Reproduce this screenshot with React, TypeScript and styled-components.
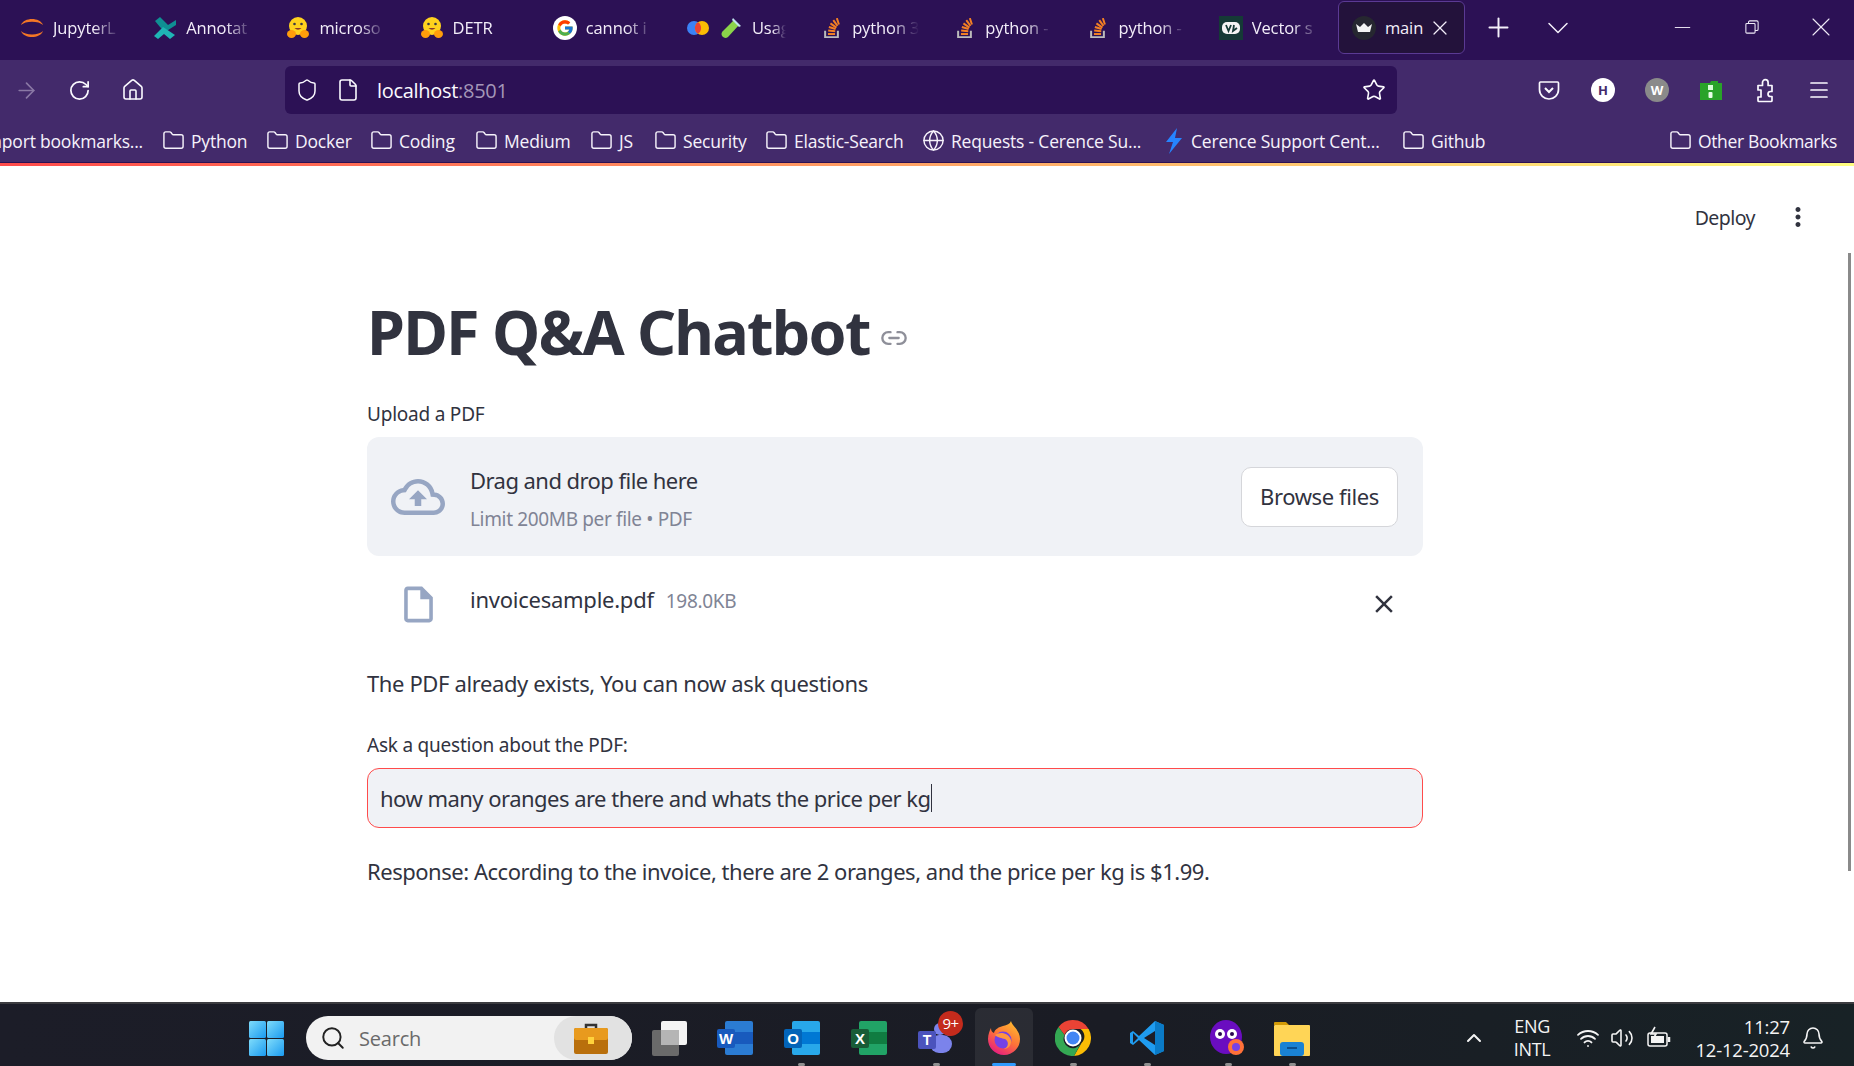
import React from 'react';
import styled, { createGlobalStyle } from 'styled-components';
import { ArrowRight, RotateCw, Home, Shield, File, Star, Menu, Link2, Plus, ChevronDown, Minus, X, Search, ChevronUp, Wifi, Volume2, Bell, Folder, Globe } from 'lucide-react';
import { MdOutlineCloudUpload, MdOutlineInsertDriveFile, MdClose, MdMoreVert } from 'react-icons/md';
import { FcGoogle } from 'react-icons/fc';

const GlobalStyle = createGlobalStyle`
  html, body { margin: 0; padding: 0; height: 100%; overflow: hidden; background: #fff; }
  body { font-family: "Noto Sans", "Open Sans", sans-serif; }
  * { box-sizing: border-box; }
`;

const UI_FONT = `"Open Sans", "Noto Sans", sans-serif`;
const APP_FONT = `"Noto Sans", "Open Sans", sans-serif`;

const Shell = styled.div`
  display: flex;
  flex-direction: column;
  height: 100vh;
  width: 100%;
  overflow: hidden;
`;

const TabStrip = styled.div`
  height: 60px;
  flex: none;
  background: #2c1155;
  display: flex;
  align-items: flex-start;
  padding: 1px 0 0 6px;
  gap: 6.2px;
  overflow: hidden;
  font-family: ${UI_FONT};
`;

const Tab = styled.div<{ $active?: boolean }>`
  width: 127px;
  height: 53px;
  flex: none;
  display: flex;
  align-items: center;
  gap: 9px;
  padding: 0 12px 0 13px;
  border-radius: 6px;
  color: #f3eef9;
  font-size: 16.5px;
  letter-spacing: -0.1px;
  background: ${(p) => (p.$active ? '#23123b' : 'transparent')};
  border: 1px solid ${(p) => (p.$active ? '#5b3a94' : 'transparent')};
`;

const TabLabel = styled.span<{ $fade?: boolean }>`
  flex: 1;
  min-width: 0;
  white-space: nowrap;
  ${(p) => p.$fade && `-webkit-mask-image: linear-gradient(to right, #000 60%, transparent 100%); mask-image: linear-gradient(to right, #000 60%, transparent 100%);`}
`;

const TabIconBox = styled.span`
  width: 24px;
  height: 24px;
  flex: none;
  display: flex;
  align-items: center;
  justify-content: center;
`;

const StripButton = styled.div`
  width: 54px;
  height: 53px;
  flex: none;
  display: flex;
  align-items: center;
  justify-content: center;
  color: #f4f0fa;
`;

const WindowControls = styled.div`
  margin-left: auto;
  margin-right: -1px;
  display: flex;
  height: 52px;
`;

const WindowButton = styled.div`
  width: 69px;
  display: flex;
  align-items: center;
  justify-content: center;
  color: #f0ebf7;
`;

const NavBar = styled.div`
  height: 60px;
  flex: none;
  background: #432a6b;
  display: flex;
  align-items: center;
`;

const NavButton = styled.div<{ $dim?: boolean }>`
  width: 53px;
  flex: none;
  display: flex;
  align-items: center;
  justify-content: center;
  color: ${(p) => (p.$dim ? '#8a78a5' : '#fbfaff')};
`;

const UrlBar = styled.div`
  width: 1112px;
  height: 48px;
  flex: none;
  margin: 0 125px 0 126px;
  background: #2c1155;
  border-radius: 6px;
  display: flex;
  align-items: center;
  padding: 0 11px 0 10px;
  color: #fbfaff;
`;

const UrlIcon = styled.span`
  display: flex;
  margin-right: 17px;
`;

const UrlText = styled.div`
  flex: 1;
  font-family: ${UI_FONT};
  font-size: 20px;
  letter-spacing: -0.3px;
  line-height: 26px;
  padding-top: 1px;
  color: #fbfaff;
`;

const UrlPort = styled.span`
  color: #a497b8;
`;

const ExtSlot = styled.div`
  width: 54px;
  flex: none;
  display: flex;
  justify-content: center;
  align-items: center;
  color: #fbfaff;
`;

const ProfileDot = styled.span<{ $grey?: boolean }>`
  width: 24px;
  height: 24px;
  border-radius: 50%;
  display: flex;
  align-items: center;
  justify-content: center;
  font: 700 13px ${UI_FONT};
  background: ${(p) => (p.$grey ? '#8a8a8a' : '#fff')};
  color: ${(p) => (p.$grey ? '#fff' : '#432a6b')};
`;

const BookmarksBar = styled.div`
  height: 43px;
  flex: none;
  background: #432a6b;
  border-bottom: 1px solid #2c1155;
  display: flex;
  align-items: center;
  overflow: hidden;
  font-family: ${UI_FONT};
  font-size: 17.5px;
  letter-spacing: -0.2px;
  color: #f6f2fb;
  padding-bottom: 1px;
`;

const ImportMark = styled.div`
  flex: none;
  width: 182px;
  margin-left: -20px;
  text-align: right;
  padding-right: 19px;
  white-space: nowrap;
  overflow: hidden;
`;

const Bookmark = styled.div<{ $w?: number; $end?: boolean }>`
  flex: none;
  width: ${(p) => (p.$w ? `${p.$w}px` : 'auto')};
  display: flex;
  align-items: center;
  gap: 6px;
  white-space: nowrap;
  ${(p) => p.$end && 'margin-left: auto; margin-right: 17px; letter-spacing: -0.35px;'}
`;

const RainbowLine = styled.div`
  height: 3px;
  flex: none;
  background: linear-gradient(90deg, #ff4b4b, #fffd80);
`;

const Main = styled.main`
  flex: 1;
  min-height: 0;
  position: relative;
  background: #fff;
  color: #31333f;
  font-family: ${APP_FONT};
`;

const TopActions = styled.div`
  height: 40px;
  margin-top: 31px;
  display: flex;
  justify-content: flex-end;
  align-items: center;
  gap: 28px;
  padding-right: 41px;
`;

const DeployLabel = styled.span`
  font-size: 19.5px;
  letter-spacing: -0.55px;
`;

const MenuDots = styled.span`
  display: flex;
  color: #31333f;
`;

const ScrollThumb = styled.div`
  position: absolute;
  right: 3px;
  top: 87px;
  width: 3px;
  height: 618px;
  background: #8a8a8a;
`;

const Content = styled.div`
  width: 1056px;
  margin-left: 367px;
  display: flex;
  flex-direction: column;
`;

const Title = styled.h1`
  margin: 55px 0 0 0;
  height: 80px;
  line-height: 80px;
  font-size: 61px;
  font-weight: 700;
  letter-spacing: -1.75px;
  display: flex;
  align-items: center;
  gap: 10px;
  white-space: nowrap;
`;

const TitleLink = styled.span`
  display: flex;
  color: #8e8f99;
  margin-top: 12px;
`;

const FieldLabel = styled.div<{ $top: number }>`
  margin-top: ${(p) => p.$top}px;
  height: 28px;
  line-height: 28px;
  font-size: 19px;
  letter-spacing: -0.22px;
`;

const DropZone = styled.div`
  margin-top: 9px;
  height: 119px;
  background: #f0f2f6;
  border-radius: 12px;
  display: flex;
  align-items: center;
  padding: 0 25px 0 24px;
  gap: 25px;
`;

const CloudIcon = styled.span`
  display: flex;
  color: #97a6c3;
`;

const DropText = styled.div`
  flex: 1;
  display: flex;
  flex-direction: column;
  gap: 7px;
  padding-top: 6px;
`;

const DropTitle = styled.div`
  height: 32px;
  line-height: 32px;
  font-size: 22px;
  letter-spacing: -0.55px;
`;

const DropHint = styled.div`
  height: 32px;
  line-height: 32px;
  font-size: 19px;
  letter-spacing: -0.35px;
  color: #808495;
`;

const BrowseButton = styled.button`
  width: 157px;
  height: 60px;
  background: #fff;
  border: 1px solid #d5d6da;
  border-radius: 10px;
  font-family: ${APP_FONT};
  font-size: 22px;
  letter-spacing: -0.4px;
  color: #31333f;
  padding: 0 0 2px;
`;

const FileRow = styled.div`
  margin-top: 18px;
  height: 60px;
  display: flex;
  align-items: center;
  padding: 0 24px 0 30px;
  gap: 30px;
`;

const FileIcon = styled.span`
  display: flex;
  color: #97a6c3;
`;

const FileInfo = styled.div`
  flex: 1;
  display: flex;
  align-items: baseline;
  gap: 12px;
  margin-top: -10px;
`;

const FileName = styled.span`
  font-size: 22px;
  letter-spacing: -0.25px;
`;

const FileSize = styled.span`
  font-size: 19px;
  letter-spacing: -0.3px;
  color: #808495;
`;

const RemoveIcon = styled.span`
  display: flex;
  color: #31333f;
`;

const Paragraph = styled.p<{ $top: number; $track: number }>`
  margin: ${(p) => p.$top}px 0 0;
  height: 32px;
  line-height: 32px;
  font-size: 22px;
  letter-spacing: ${(p) => p.$track}px;
  white-space: nowrap;
`;

const QuestionInput = styled.div`
  margin-top: 9px;
  height: 60px;
  background: #f0f2f6;
  border: 1px solid #ff4b4b;
  border-radius: 12px;
  padding: 0 12px;
  display: flex;
  align-items: center;
  font-size: 22px;
  letter-spacing: -0.52px;
  white-space: nowrap;
`;

const Caret = styled.span`
  width: 1.5px;
  height: 28px;
  background: #31333f;
`;

const TaskBar = styled.footer`
  height: 64px;
  flex: none;
  background: linear-gradient(90deg, #1c1d28, #1a1c24 60%, #182226);
  border-top: 2px solid #3c3c40;
  display: flex;
  align-items: center;
  color: #f4f4f4;
  font-family: ${UI_FONT};
  padding: 6px 0 0 249px;
`;

const StartButton = styled.div`
  display: flex;
  margin-right: 22px;
`;

const SearchPill = styled.div`
  width: 326px;
  height: 44px;
  flex: none;
  background: #f2f2f2;
  border-radius: 22px;
  display: flex;
  align-items: center;
  padding-left: 14px;
  gap: 13px;
  color: #6a6a6a;
  font-size: 20px;
  letter-spacing: -0.2px;
  margin-right: 4px;
`;

const SearchGlyph = styled.span`
  display: flex;
  color: #222;
`;

const SearchBadge = styled.span`
  margin-left: auto;
  width: 78px;
  height: 44px;
  background: #e2e2e2;
  border-radius: 22px;
  display: flex;
  align-items: center;
  justify-content: flex-start;
  padding-left: 20px;
`;

const AppSlot = styled.div<{ $w: number }>`
  position: relative;
  width: ${(p) => p.$w}px;
  height: 56px;
  flex: none;
  display: flex;
  align-items: center;
  justify-content: center;
`;

const AppIconBox = styled.span`
  position: relative;
  display: flex;
`;

const ActiveBack = styled.span`
  position: absolute;
  top: -2px;
  bottom: 0;
  left: 50%;
  width: 58px;
  margin-left: -29px;
  border-radius: 6px 6px 0 0;
  background: rgba(255, 255, 255, 0.07);
`;

const RunDot = styled.span<{ $active?: boolean }>`
  position: absolute;
  bottom: 0;
  left: 50%;
  height: 3px;
  width: ${(p) => (p.$active ? 24 : 7)}px;
  margin-left: ${(p) => (p.$active ? -12 : -3.5)}px;
  border-radius: 2px;
  background: ${(p) => (p.$active ? '#2e9bff' : '#8f8f8f')};
`;

const Badge = styled.span`
  position: absolute;
  top: 1px;
  left: 36px;
  width: 25px;
  height: 25px;
  border-radius: 50%;
  background: #c42b1c;
  color: #fff;
  font-size: 15px;
  line-height: 25px;
  text-align: center;
  letter-spacing: -0.5px;
`;

const Tray = styled.div`
  margin-left: auto;
  display: flex;
  align-items: center;
  padding-right: 29px;
`;

const TrayIcon = styled.span<{ $gap: number }>`
  display: flex;
  margin-right: ${(p) => p.$gap}px;
  color: #f4f4f4;
`;

const LangBox = styled.div`
  text-align: center;
  font-size: 18px;
  line-height: 23px;
  letter-spacing: -0.3px;
  margin-right: 26px;
`;

const Clock = styled.div`
  text-align: right;
  font-size: 18.5px;
  line-height: 23px;
  letter-spacing: -0.2px;
  margin-right: 11px;
  white-space: nowrap;
`;

/* ---------- drawn icons ---------- */
const Jupyter = () => (
  <svg width="24" height="24" viewBox="0 0 24 24">
    <path d="M1 9C4 1 20 1 23 9 19 4.500 5 4.500 1 9Z" fill="#f37726" />
    <path d="M1 15C4 23 20 23 23 15 19 19.500 5 19.500 1 15Z" fill="#f37726" />
  </svg>
);

const Annotate = () => (
  <svg width="24" height="24" viewBox="0 0 24 24">
    <path d="M2 5 7 1 15 9 23 4 23 9 12 16 7 11Z" fill="#0f8f93" />
    <path d="M1 20 10 11 22 19 17 23 11 18 5 23Z" fill="#1fb5b5" />
  </svg>
);

const HuggingFace = () => (
  <svg width="25" height="25" viewBox="0 0 24 24">
    <circle cx="12" cy="10.500" r="9" fill="#ffd21e" />
    <circle cx="8.500" cy="8.500" r="1.300" fill="#3a3b45" />
    <circle cx="15.500" cy="8.500" r="1.300" fill="#3a3b45" />
    <path d="M8.500 12.500Q12 16 15.500 12.500Z" fill="#8a3b2a" />
    <ellipse cx="5.500" cy="18.500" rx="4.500" ry="4" fill="#ff9d0b" />
    <ellipse cx="18.500" cy="18.500" rx="4.500" ry="4" fill="#ff9d0b" />
  </svg>
);

const GoogleBadge = () => (
  <svg width="26" height="26" viewBox="0 0 26 26">
    <circle cx="13" cy="13" r="13" fill="#fff" />
    <foreignObject x="3" y="3" width="20" height="20">
      <FcGoogle size={20} />
    </foreignObject>
  </svg>
);

const Gemini = () => (
  <svg width="24" height="24" viewBox="0 0 24 24">
    <circle cx="8" cy="12" r="7" fill="#3b82f6" />
    <circle cx="16" cy="12" r="7" fill="#fbbc04" />
    <path d="M12 6.200A7 7 0 0 1 12 17.800 7 7 0 0 1 12 6.200Z" fill="#ea4335" />
  </svg>
);

const TestTube = () => (
  <svg width="24" height="24" viewBox="0 0 24 24">
    <path d="M15 4 20 9 9 21Q6 23 3.500 20.500 1.500 18 3.500 15.500Z" fill="#8bd44a" />
    <path d="M14 2 22 10 20 11 13 4Z" fill="#bfe3ee" />
  </svg>
);

const StackOverflow = () => (
  <svg width="17" height="20" viewBox="0 0 24 28">
    <path d="M3 18v9h18v-9" fill="none" stroke="#bcbbbb" strokeWidth="2.800" />
    <g stroke="#f48024" strokeWidth="2.800">
      <path d="M7 22.500h10" />
      <path d="M7.300 17.500l10 1" />
      <path d="M8.300 12.500l9.500 3" />
      <path d="M10.500 7.500l8.500 6" />
      <path d="M14.500 3l6 8" />
      <path d="M19.500 0l3 9" />
    </g>
  </svg>
);

const VectorIcon = () => (
  <svg width="24" height="24" viewBox="0 0 24 24">
    <rect width="24" height="24" fill="#153a36" />
    <rect x="3" y="6" width="18" height="12" rx="5" fill="#f4f4f4" />
    <path d="M7 9l2.500 6L12 9M15 9l-1 6 4-3" stroke="#153a36" strokeWidth="1.800" fill="none" />
  </svg>
);

const Crown = () => (
  <svg width="24" height="24" viewBox="0 0 24 24">
    <circle cx="12" cy="12" r="12" fill="#262730" />
    <path d="M4 8l4 3 4-4 4 4 4-3-2 8H6Z" fill="#f4f4f4" />
  </svg>
);

const Pocket = () => (
  <svg width="24" height="24" viewBox="0 0 24 24" fill="none" stroke="#fbfaff" strokeWidth="1.700">
    <path d="M3.500 4h17a1 1 0 0 1 1 1v6.500c0 5.500-4.500 9.500-9.500 9.500S2.500 17 2.500 11.500V5a1 1 0 0 1 1-1Z" />
    <path d="M8 10l4 4 4-4" strokeWidth="2" />
  </svg>
);

const GreenExt = () => (
  <svg width="24" height="24" viewBox="0 0 24 24">
    <path d="M1 5h10l1-2h7v2h4v17H1Z" fill="#29a329" />
    <rect x="9" y="7" width="5" height="5" fill="#d8ffd8" />
    <rect x="9.500" y="14" width="4" height="6" rx="1" fill="#e8ffe8" />
  </svg>
);

const PuzzlePiece = () => (
  <svg width="24" height="26" viewBox="0 0 24 26" fill="none" stroke="#fbfaff" strokeWidth="1.700" strokeLinejoin="round">
    <path d="M5 8.500h4.500V5.500a2.800 2.800 0 0 1 5.600 0v3H19v6h-1.500a2.500 2.500 0 0 0 0 5H19v4a1 1 0 0 1-1 1H6a1 1 0 0 1-1-1v-3.500h3v-7H5Z" />
  </svg>
);

const RestoreIcon = () => (
  <svg width="14" height="14" viewBox="0 0 16 16" fill="none" stroke="#f0ebf7" strokeWidth="1.200">
    <rect x="1" y="4" width="10.500" height="11" rx="1" />
    <path d="M4 4V2.500A1.500 1.500 0 0 1 5.500 1h8A1.500 1.500 0 0 1 15 2.500v8a1.500 1.500 0 0 1-1.500 1.500h-2" />
  </svg>
);

const WindowsLogo = () => (
  <svg width="35" height="35" viewBox="0 0 35 35">
    <defs>
      <linearGradient id="winA" x1="0" y1="0" x2="1" y2="1">
        <stop offset="0" stopColor="#7fdcfb" />
        <stop offset="1" stopColor="#1a9af0" />
      </linearGradient>
    </defs>
    <rect x="0" y="0" width="17" height="17" rx="1.500" fill="url(#winA)" />
    <rect x="18" y="0" width="17" height="17" rx="1.500" fill="url(#winA)" />
    <rect x="0" y="18" width="17" height="17" rx="1.500" fill="url(#winA)" />
    <rect x="18" y="18" width="17" height="17" rx="1.500" fill="url(#winA)" />
  </svg>
);

const Briefcase = () => (
  <svg width="34" height="32" viewBox="0 0 34 32">
    <path d="M12 7V3h10v4" fill="none" stroke="#333" strokeWidth="2.500" />
    <rect y="6" width="34" height="26" rx="2" fill="#b96f0c" />
    <rect y="6" width="34" height="12" rx="2" fill="#e89a1e" />
    <rect x="14" y="15" width="6" height="7" fill="#ffd23c" />
  </svg>
);

const TaskView = () => (
  <svg width="35" height="35" viewBox="0 0 35 35">
    <rect x="0" y="9" width="27" height="26" rx="2" fill="#6a6a6a" />
    <rect x="9" y="0" width="26" height="24" rx="2" fill="#f4f4f4" />
    <rect x="9" y="9" width="18" height="15" fill="#b5b5b5" />
  </svg>
);

const OfficeLetter = ({ letter, back, front, mid }: { letter: string; back: string; front: string; mid: string }) => (
  <svg width="36" height="34" viewBox="0 0 36 34">
    <rect x="8" y="0" width="28" height="34" rx="2" fill={back} />
    <rect x="8" y="11" width="28" height="12" fill={mid} />
    <rect x="0" y="8" width="18" height="19" rx="2" fill={front} />
    <text x="9" y="23" textAnchor="middle" fontSize="15" fontWeight="700" fill="#fff" fontFamily="Liberation Sans, sans-serif">{letter}</text>
  </svg>
);

const Teams = () => (
  <svg width="36" height="34" viewBox="0 0 36 34">
    <circle cx="22" cy="8" r="6" fill="#7b83eb" />
    <circle cx="31" cy="11" r="4" fill="#5059c9" />
    <rect x="12" y="14" width="22" height="18" rx="9" fill="#7b83eb" />
    <rect x="0" y="10" width="18" height="18" rx="2" fill="#4b53bc" />
    <text x="9" y="24" textAnchor="middle" fontSize="14" fontWeight="700" fill="#fff" fontFamily="Liberation Sans, sans-serif">T</text>
  </svg>
);

const Firefox = () => (
  <svg width="36" height="36" viewBox="0 0 36 36">
    <defs>
      <linearGradient id="ffA" x1="0.8" y1="0" x2="0.2" y2="1">
        <stop offset="0" stopColor="#ffbd2e" />
        <stop offset="0.5" stopColor="#ff7139" />
        <stop offset="1" stopColor="#e31587" />
      </linearGradient>
    </defs>
    <path d="M25 1c1 5 9 9 9 18a16 16 0 1 1-32 0c0-5 2-9 3-11 0 3 1 4 3 5 1-4 5-6 9-7 4-1 7-2 8-5Z" fill="url(#ffA)" />
    <circle cx="17" cy="20" r="8.500" fill="#7542e5" />
    <path d="M9 15c5-4 14-2 16 5 1 5-3 9-7 9 5-2 5-8 1-10-3-1-7-1-10-4Z" fill="#ff9640" />
  </svg>
);

const Chrome = () => (
  <svg width="36" height="36" viewBox="0 0 36 36">
    <path d="M18 0A18 18 0 0 1 33.600 9H18a9 9 0 0 0-8.500 6L3.500 7A18 18 0 0 1 18 0Z" fill="#ea4335" />
    <path d="M33.600 9A18 18 0 0 1 19 36l7.500-13a9 9 0 0 0-1-14Z" fill="#fbbc04" />
    <path d="M3.500 7A18 18 0 0 0 19 36l7-13a9 9 0 0 1-16.500-8Z" fill="#34a853" />
    <circle cx="18" cy="18" r="8.500" fill="#fff" />
    <circle cx="18" cy="18" r="6.500" fill="#4285f4" />
  </svg>
);

const VSCode = () => (
  <svg width="36" height="36" viewBox="0 0 36 36">
    <path d="M26 1 35 5v26l-9 4L10 20l-6 5-3-2v-10l3-2 6 5Z" fill="#1f9cf0" />
    <path d="M26 1v34l9-4V5Z" fill="#0a7ac6" />
    <path d="M26 11 15 18l11 7Z" fill="#1c1d28" />
    <path d="M4 13v10l5-5Z" fill="#1c1d28" />
  </svg>
);

const MaskBrowser = () => (
  <svg width="36" height="36" viewBox="0 0 36 36">
    <ellipse cx="16" cy="17" rx="16" ry="17" fill="#6a0dc0" />
    <circle cx="10" cy="14" r="5" fill="#fff" />
    <circle cx="22" cy="14" r="5" fill="#fff" />
    <circle cx="10" cy="14" r="2" fill="#2a0650" />
    <circle cx="22" cy="14" r="2" fill="#2a0650" />
    <circle cx="26" cy="27" r="8" fill="#ff7139" />
    <circle cx="26" cy="27" r="4" fill="#7542e5" />
  </svg>
);

const Explorer = () => (
  <svg width="36" height="36" viewBox="0 0 36 36">
    <path d="M0 3a1 1 0 0 1 1-1h11l3 3h-15Z" fill="#d29a06" />
    <rect y="5" width="36" height="31" rx="1" fill="#ffd556" />
    <rect x="6" y="22" width="24" height="14" rx="3" fill="#1a82d4" />
    <rect x="13" y="27" width="10" height="2" fill="#0b4f8f" />
  </svg>
);

const Battery = () => (
  <svg width="26" height="24" viewBox="0 0 26 24" fill="none" stroke="#f4f4f4" strokeWidth="1.500">
    <rect x="2" y="7" width="19" height="13" rx="2" />
    <rect x="5" y="10" width="13" height="7" fill="#f4f4f4" stroke="none" />
    <path d="M23 11v5" strokeWidth="2.500" />
    <path d="M9 1 5 8h5l-3 5" strokeWidth="1.600" />
  </svg>
);

const FolderIcon = () => <Folder size={23} strokeWidth={1.5} />;

const LightningMark = () => (
  <svg width="22" height="26" viewBox="0 0 22 26">
    <path d="M14 0 3 14h7L6 26 19 10h-7Z" fill="#2684ff" />
  </svg>
);

/* ---------- data ---------- */
const tabs: { label: string; icons: React.ReactNode[] }[] = [
  { label: 'JupyterL', icons: [<Jupyter key="a" />] },
  { label: 'Annotat', icons: [<Annotate key="a" />] },
  { label: 'microso', icons: [<HuggingFace key="a" />] },
  { label: 'DETR', icons: [<HuggingFace key="a" />] },
  { label: 'cannot i', icons: [<GoogleBadge key="a" />] },
  { label: 'Usag', icons: [<Gemini key="a" />, <TestTube key="b" />] },
  { label: 'python 3', icons: [<StackOverflow key="a" />] },
  { label: 'python -', icons: [<StackOverflow key="a" />] },
  { label: 'python -', icons: [<StackOverflow key="a" />] },
  { label: 'Vector s', icons: [<VectorIcon key="a" />] },
];

const bookmarks: { label: string; w: number; icon: React.ReactNode }[] = [
  { label: 'Python', w: 104, icon: <FolderIcon /> },
  { label: 'Docker', w: 104, icon: <FolderIcon /> },
  { label: 'Coding', w: 105, icon: <FolderIcon /> },
  { label: 'Medium', w: 115, icon: <FolderIcon /> },
  { label: 'JS', w: 64, icon: <FolderIcon /> },
  { label: 'Security', w: 111, icon: <FolderIcon /> },
  { label: 'Elastic-Search', w: 157, icon: <FolderIcon /> },
  { label: 'Requests - Cerence Su...', w: 241, icon: <Globe size={23} strokeWidth={1.5} /> },
  { label: 'Cerence Support Cent...', w: 239, icon: <LightningMark /> },
  { label: 'Github', w: 100, icon: <FolderIcon /> },
];

const apps: { w: number; icon: React.ReactNode; dot?: boolean; active?: boolean; badge?: string }[] = [
  { w: 66, icon: <TaskView /> },
  { w: 66, icon: <OfficeLetter letter="W" back="#2b7cd3" mid="#185abd" front="#185abd" /> },
  { w: 67, icon: <OfficeLetter letter="O" back="#28a8ea" mid="#0078d4" front="#0364b8" />, dot: true },
  { w: 67, icon: <OfficeLetter letter="X" back="#21a366" mid="#107c41" front="#185c37" /> },
  { w: 68, icon: <Teams />, dot: true, badge: '9+' },
  { w: 68, icon: <Firefox />, active: true },
  { w: 70, icon: <Chrome />, dot: true },
  { w: 78, icon: <VSCode />, dot: true },
  { w: 84, icon: <MaskBrowser />, dot: true },
  { w: 44, icon: <Explorer />, dot: true },
];

export default function App() {
  return (
    <Shell>
      <GlobalStyle />
      <TabStrip>
        {tabs.map((t, i) => (
          <Tab key={i}>
            {t.icons.map((ic, j) => (
              <TabIconBox key={j}>{ic}</TabIconBox>
            ))}
            <TabLabel $fade>{t.label}</TabLabel>
          </Tab>
        ))}
        <Tab $active>
          <TabIconBox>
            <Crown />
          </TabIconBox>
          <TabLabel>main</TabLabel>
          <X size={24} strokeWidth={1.2} />
        </Tab>
        <StripButton>
          <Plus size={31} strokeWidth={1.5} />
        </StripButton>
        <StripButton>
          <ChevronDown size={36} strokeWidth={1} />
        </StripButton>
        <WindowControls>
          <WindowButton>
            <Minus size={25} strokeWidth={0.9} />
          </WindowButton>
          <WindowButton>
            <RestoreIcon />
          </WindowButton>
          <WindowButton>
            <X size={32} strokeWidth={0.8} />
          </WindowButton>
        </WindowControls>
      </TabStrip>

      <NavBar>
        <NavButton $dim>
          <ArrowRight size={25} strokeWidth={1.6} />
        </NavButton>
        <NavButton>
          <RotateCw size={23} strokeWidth={1.8} />
        </NavButton>
        <NavButton>
          <Home size={24} strokeWidth={1.6} />
        </NavButton>
        <UrlBar>
          <UrlIcon>
            <Shield size={24} strokeWidth={1.5} />
          </UrlIcon>
          <UrlIcon>
            <File size={24} strokeWidth={1.6} />
          </UrlIcon>
          <UrlText>
            localhost<UrlPort>:8501</UrlPort>
          </UrlText>
          <Star size={24} strokeWidth={1.6} />
        </UrlBar>
        <ExtSlot>
          <Pocket />
        </ExtSlot>
        <ExtSlot>
          <ProfileDot>H</ProfileDot>
        </ExtSlot>
        <ExtSlot>
          <ProfileDot $grey>W</ProfileDot>
        </ExtSlot>
        <ExtSlot>
          <GreenExt />
        </ExtSlot>
        <ExtSlot>
          <PuzzlePiece />
        </ExtSlot>
        <ExtSlot>
          <Menu size={24} strokeWidth={1.7} />
        </ExtSlot>
      </NavBar>

      <BookmarksBar>
        <ImportMark>Import bookmarks...</ImportMark>
        {bookmarks.map((b) => (
          <Bookmark key={b.label} $w={b.w}>
            {b.icon}
            {b.label}
          </Bookmark>
        ))}
        <Bookmark $end>
          <FolderIcon />
          Other Bookmarks
        </Bookmark>
      </BookmarksBar>
      <RainbowLine />

      <Main>
        <TopActions>
          <DeployLabel>Deploy</DeployLabel>
          <MenuDots>
            <MdMoreVert size={30} />
          </MenuDots>
        </TopActions>
        <Content>
          <Title>
            PDF Q&amp;A Chatbot
            <TitleLink>
              <Link2 size={28} strokeWidth={2} />
            </TitleLink>
          </Title>
          <FieldLabel $top={28}>Upload a PDF</FieldLabel>
          <DropZone>
            <CloudIcon>
              <MdOutlineCloudUpload size={54} />
            </CloudIcon>
            <DropText>
              <DropTitle>Drag and drop file here</DropTitle>
              <DropHint>Limit 200MB per file • PDF</DropHint>
            </DropText>
            <BrowseButton>Browse files</BrowseButton>
          </DropZone>
          <FileRow>
            <FileIcon>
              <MdOutlineInsertDriveFile size={43} />
            </FileIcon>
            <FileInfo>
              <FileName>invoicesample.pdf</FileName>
              <FileSize>198.0KB</FileSize>
            </FileInfo>
            <RemoveIcon>
              <MdClose size={30} />
            </RemoveIcon>
          </FileRow>
          <Paragraph $top={33} $track={-0.38}>The PDF already exists, You can now ask questions</Paragraph>
          <FieldLabel $top={32}>Ask a question about the PDF:</FieldLabel>
          <QuestionInput>
            how many oranges are there and whats the price per kg
            <Caret />
          </QuestionInput>
          <Paragraph $top={27} $track={-0.47}>Response: According to the invoice, there are 2 oranges, and the price per kg is $1.99.</Paragraph>
        </Content>
        <ScrollThumb />
      </Main>

      <TaskBar>
        <StartButton>
          <WindowsLogo />
        </StartButton>
        <SearchPill>
          <SearchGlyph>
            <Search size={26} strokeWidth={1.8} />
          </SearchGlyph>
          Search
          <SearchBadge>
            <Briefcase />
          </SearchBadge>
        </SearchPill>
        {apps.map((a, i) => (
          <AppSlot key={i} $w={a.w}>
            {a.active && <ActiveBack />}
            <AppIconBox>{a.icon}</AppIconBox>
            {a.badge && <Badge>{a.badge}</Badge>}
            {(a.dot || a.active) && <RunDot $active={a.active} />}
          </AppSlot>
        ))}
        <Tray>
          <TrayIcon $gap={28}>
            <ChevronUp size={24} strokeWidth={2} />
          </TrayIcon>
          <LangBox>
            ENG
            <br />
            INTL
          </LangBox>
          <TrayIcon $gap={10}>
            <Wifi size={24} strokeWidth={1.8} />
          </TrayIcon>
          <TrayIcon $gap={12}>
            <Volume2 size={24} strokeWidth={1.6} />
          </TrayIcon>
          <TrayIcon $gap={23}>
            <Battery />
          </TrayIcon>
          <Clock>
            11:27
            <br />
            12-12-2024
          </Clock>
          <TrayIcon $gap={0}>
            <Bell size={24} strokeWidth={1.6} />
          </TrayIcon>
        </Tray>
      </TaskBar>
    </Shell>
  );
}
